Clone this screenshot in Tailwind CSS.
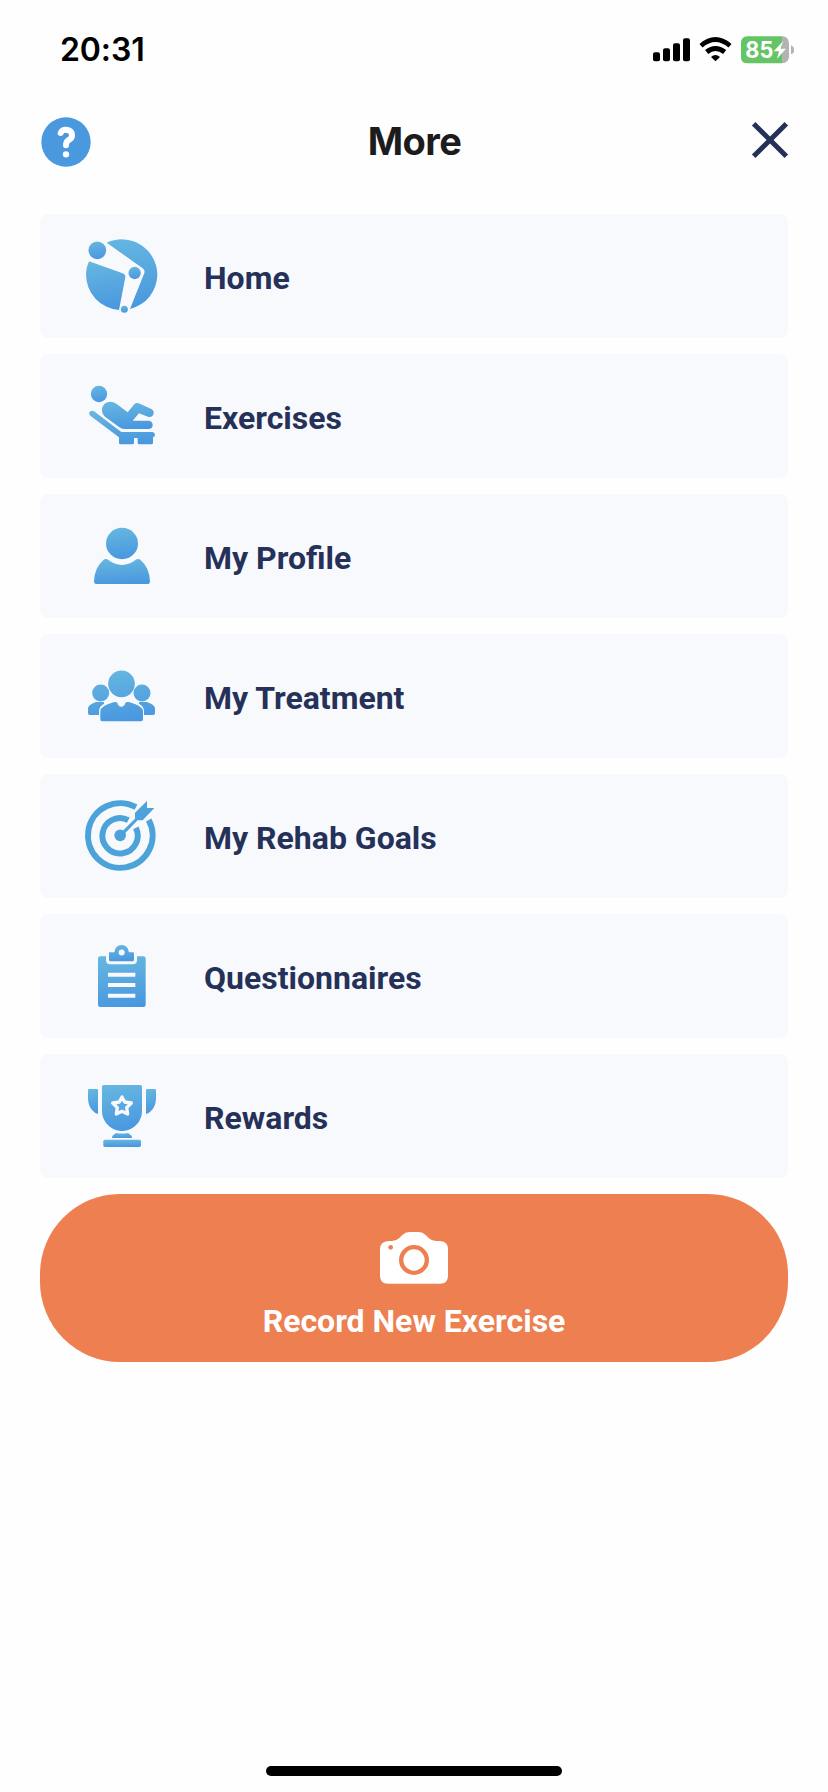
<!DOCTYPE html>
<html lang="en">
<head>
<meta charset="utf-8">
<title>More</title>
<script src="https://cdn.jsdelivr.net/npm/@tailwindcss/browser@4"></script>
</head>
<body class="bg-white">
<div class="flex h-[1792px] w-[828px] flex-col overflow-hidden bg-[#fefefe] font-['Roboto',sans-serif]">
  <svg class="absolute h-0 w-0"><defs>
    <linearGradient id="g" x1="0.4" y1="0" x2="0.55" y2="1"><stop offset="0" stop-color="#65b6e0"/><stop offset="1" stop-color="#4997df"/></linearGradient>
    <linearGradient id="team" gradientUnits="userSpaceOnUse" x1="260" y1="122" x2="280" y2="275"><stop offset="0" stop-color="#65b6e0"/><stop offset="1" stop-color="#4997df"/></linearGradient>
    <linearGradient id="home" gradientUnits="userSpaceOnUse" x1="260" y1="101" x2="285" y2="315"><stop offset="0" stop-color="#65b6e0"/><stop offset="1" stop-color="#4997df"/></linearGradient>
  </defs></svg>

  <!-- Status bar -->
  <div class="flex h-[100px] items-center justify-between pl-[60px] pr-[32px]">
    <span class="font-['Inter',sans-serif] text-[32px] font-semibold leading-none tracking-[-0.1px] text-black">20:31</span>
    <svg class="h-[30px] w-[144px]" viewBox="714 104 432 90">
      <rect x="717" y="156" width="21" height="27" rx="6"/><rect x="747" y="144" width="21" height="39" rx="6"/><rect x="777" y="129" width="21" height="54" rx="6"/><rect x="807" y="114" width="21" height="69" rx="6"/>
      <path d="M861 136Q904 99 948 136" fill="none" stroke="#000" stroke-width="14"/>
      <path d="M878 155Q904 134 932 155" fill="none" stroke="#000" stroke-width="15"/>
      <path d="M891 170Q904 158 918 170L904.500 183Z"/>
      <path d="M1001 108H1104V189H1001Q981 189 981 169V128Q981 108 1001 108Z" fill="#65c466"/>
      <path d="M1104 108Q1125 109 1125 130V168Q1125 188 1104 189Z" fill="#b3b3b3"/>
      <path d="M1131 135Q1140 138 1140 149T1131 162Z" fill="#b3b3b3"/>
      <text x="994" y="173" font-family="Inter" font-weight="700" font-size="67" textLength="84" lengthAdjust="spacingAndGlyphs" fill="#fff">85</text>
      <path d="M1107 123L1079 153H1095L1089 175L1116 145H1100Z" fill="#fff"/>
    </svg>
  </div>

  <!-- Header -->
  <header class="grid h-[114px] grid-cols-[1fr_auto_1fr] items-start pl-[40px] pr-[39px] pt-[16px]">
    <svg class="h-[52px] w-[52px]" viewBox="120 348 156 156">
      <circle cx="198" cy="426" r="74" fill="#4a99df"/>
      <path d="M182 399Q186 389 198 389Q216 390 216 406Q216 416 205 421Q198 425 198 436" fill="none" stroke="#fff" stroke-width="18" stroke-linecap="round" stroke-linejoin="round"/>
      <circle cx="198" cy="463" r="9.500" fill="#fff"/>
    </svg>
    <h1 class="pt-[5px] font-['Inter',sans-serif] text-[38px] font-bold leading-[40px] tracking-[-0.6px] text-[#1c1c1e]">More</h1>
    <svg class="mt-[5px] h-[38px] w-[38px] justify-self-end" viewBox="1011 363 114 114"><path d="M1019 371L1117 469M1117 371L1019 469" stroke="#253158" stroke-width="15"/></svg>
  </header>

  <!-- Menu -->
  <nav class="flex flex-col gap-4 px-10 text-[32px] font-bold text-[#253158]">
    <a class="flex h-[124px] items-center rounded-lg bg-[#f8f9fd]">
      <svg class="h-[124px] w-[164px]" viewBox="30 27 492 372">
        <circle cx="202" cy="136" r="26.500" fill="url(#g)"/>
        <path d="M230 113A107 107 0 0 1 382 208A107 107 0 0 1 300 312L343 204Q346 196 338 190Z" fill="url(#home)"/>
        <path d="M177 169L278 205Q287 208 286 217L267 315A107 107 0 0 1 168 208Q168 188 177 169Z" fill="url(#g)"/>
        <circle cx="314" cy="204" r="18.500" fill="url(#g)"/>
        <circle cx="283" cy="313" r="10.500" fill="url(#g)"/>
      </svg>
      <span class="pt-1">Home</span>
    </a>
    <a class="flex h-[124px] items-center rounded-lg bg-[#f8f9fd]">
      <svg class="h-[124px] w-[164px]" viewBox="30 12 492 372">
        <circle cx="207" cy="132" r="24.500" fill="url(#g)"/>
        <path d="M240 155Q250 155 260 162L293 187L313 163Q318 157 326 160L364 177Q372 181 371 190Q368 203 356 201L327 190L308 212H357Q368 214 368 225T357 237H283Q275 237 267 231L226 201Q216 192 216 180Q217 157 240 155Z" fill="url(#g)"/>
        <path d="M192 184L274 246H368Q375 247 375 255Q374 261 369 262V278Q369 283 364 283H328Q323 283 323 278V264H312V278Q312 283 307 283H272Q267 283 267 278V262L181 197Q176 192 178 187Q184 179 192 184Z" fill="url(#g)"/>
      </svg>
      <span class="pt-1">Exercises</span>
    </a>
    <a class="flex h-[124px] items-center rounded-lg bg-[#f8f9fd]">
      <svg class="h-[124px] w-[164px]" viewBox="30 12 492 372">
        <ellipse cx="276" cy="160.500" rx="48" ry="47" fill="url(#g)"/>
        <path d="M232 208Q276 242 320 208Q326 205 331 209Q360 234 360 275Q360 282 353 282H199Q192 282 192 275Q192 234 221 209Q226 205 232 208Z" fill="url(#g)"/>
      </svg>
      <span class="pt-1">My Profile</span>
    </a>
    <a class="flex h-[124px] items-center rounded-lg bg-[#f8f9fd]">
      <svg class="h-[124px] w-[164px]" viewBox="30 12 492 372">
        <g fill="url(#team)">
          <circle cx="274.500" cy="161.500" r="40"/><circle cx="212" cy="189" r="25.500"/><circle cx="336" cy="189" r="25.500"/>
          <path d="M198 216H222V221Q207 229 207 244V255H180Q174 255 174 250V235Q174 225 198 216Z"/>
          <path d="M351 216H327V221Q342 229 342 244V255H369Q375 255 375 250V235Q375 225 351 216Z"/>
          <path d="M250 217Q258 215 262 218Q264 229 274 230Q284 229 286 218Q291 215 299 217Q339 228 339 244V268Q339 274 333 274H217Q211 274 211 268V244Q211 228 250 217Z"/>
        </g>
      </svg>
      <span class="pt-1">My Treatment</span>
    </a>
    <a class="flex h-[124px] items-center rounded-lg bg-[#f8f9fd]">
      <svg class="h-[124px] w-[164px]" viewBox="30 12 492 372">
        <g fill="none" stroke="#4ca3da" stroke-width="18">
          <path d="M318 111.700A97 97 0 1 0 356 150"/>
          <path d="M295 150.500A53 53 0 1 0 317.500 173.500"/>
        </g>
        <circle cx="270.500" cy="196" r="17.500" fill="#4ca3da"/>
        <path d="M268 193L315 146V128L351 93V114H373L338 151H323L275 200Z" fill="#4ca3da"/>
      </svg>
      <span class="pt-1">My Rehab Goals</span>
    </a>
    <a class="flex h-[124px] items-center rounded-lg bg-[#f8f9fd]">
      <svg class="h-[124px] w-[164px]" viewBox="30 12 492 372">
        <path fill-rule="evenodd" d="M237 127H253Q255 106 275 105Q294 106 297 127H308Q312 127 312 131V149Q312 154 307 154H242Q237 154 237 149ZM275 118.500A9 9 0 1 0 275 136.500A9 9 0 1 0 275 118.500Z" fill="url(#g)"/>
        <path fill-rule="evenodd" d="M211 139H228V150Q228 163 241 163H308Q321 163 321 150V139H340Q347 139 347 146V284Q347 291 340 291H211Q204 291 204 284V146Q204 139 211 139ZM236 188Q234 188 234 190V200H316V188ZM234 219V231H316V219ZM234 251V263H316V251Z" fill="url(#g)"/>
      </svg>
      <span class="pt-1">Questionnaires</span>
    </a>
    <a class="flex h-[124px] items-center rounded-lg bg-[#f8f9fd]">
      <svg class="h-[124px] w-[164px]" viewBox="30 12 492 372">
        <path d="M178 117H200Q204 117 204 121V192Q197 192 190 184Q174 168 174 146V121Q174 117 178 117Z" fill="url(#g)"/>
        <path d="M374 117H352Q348 117 348 121V192Q355 192 362 184Q378 168 378 146V121Q378 117 374 117Z" fill="url(#g)"/>
        <path d="M221 105H331Q336 105 336 110V183C336 218 306 243 276 243S216 218 216 183V110Q216 105 221 105Z" fill="url(#g)"/>
        <path d="M276 141L284 156L304 159L290 173L293 192L276 184L259 192L262 173L248 159L268 156Z" fill="none" stroke="#f8f9fd" stroke-width="10" stroke-linejoin="round"/>
        <path d="M258 249Q276 252 294 249L303 256Q306 259 306 264H246Q246 259 249 256Z" fill="url(#g)"/>
        <rect x="220" y="269" width="113" height="22" rx="5" fill="url(#g)"/>
      </svg>
      <span class="pt-1">Rewards</span>
    </a>
    <button class="flex h-[168px] flex-col items-center rounded-[80px] bg-[#ed7f50] pt-[36px] text-white">
      <svg class="h-[56px] w-[72px]" viewBox="414 150 216 168">
        <path d="M446 183H456Q469 183 477 175L487 165Q496 156 508 156H536Q548 156 557 165L567 175Q575 183 588 183H600Q624 184 624 208V287Q624 311 600 311H444Q420 311 420 287V208Q420 184 446 183Z" fill="#fff"/>
        <circle cx="522" cy="240" r="38.500" fill="none" stroke="#ed7f50" stroke-width="13"/>
        <circle cx="452" cy="202" r="7" fill="#ed7f50"/>
      </svg>
      <span class="mt-[15px] leading-10">Record New Exercise</span>
    </button>
  </nav>

  <!-- Home indicator -->
  <div class="mx-auto mb-4 mt-auto h-[10px] w-[296px] rounded-full bg-black"></div>
</div>
</body>
</html>
